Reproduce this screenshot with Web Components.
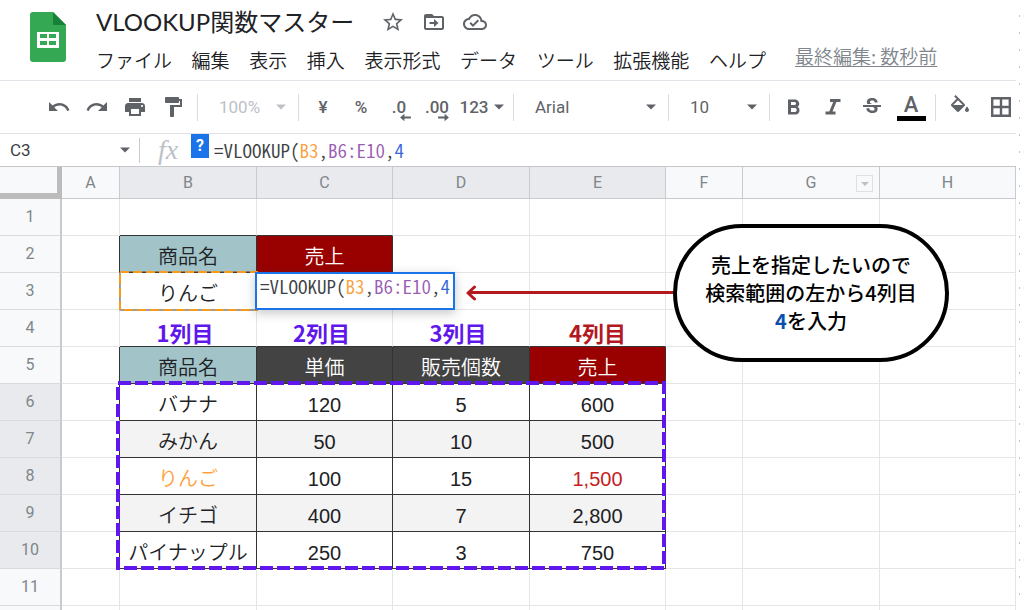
<!DOCTYPE html>
<html lang="ja">
<head>
<meta charset="utf-8">
<meta name="viewport" content="width=device-width, initial-scale=1">
<title>VLOOKUP関数マスター</title>
<style>
  html, body { margin: 0; background: #fff; }
  body { font-family: "Liberation Sans", "Noto Sans CJK JP", sans-serif; color: #202124; overflow-x: hidden; }
</style>
</head>
<body>
<sheet-app></sheet-app>
<script>
const define = (name, html, setup) => {
  const template = document.createElement('template');
  template.innerHTML = html;
  customElements.define(name, class extends HTMLElement {
    constructor() {
      super();
      this.attachShadow({ mode: 'open' }).append(template.content.cloneNode(true));
    }
    connectedCallback() { if (setup) setup(this, this.shadowRoot); }
  });
};

/* ---------- icons ---------- */
const ICONS = {
  undo: 'M12.5 8c-2.65 0-5.05.99-6.9 2.6L2 7v9h9l-3.62-3.62c1.39-1.16 3.16-1.88 5.12-1.88 3.54 0 6.55 2.31 7.6 5.5l2.37-.78C21.08 11.03 17.15 8 12.5 8z',
  redo: 'M18.4 10.6C16.55 8.99 14.15 8 11.5 8c-4.65 0-8.58 3.03-9.96 7.22L3.9 16c1.05-3.19 4.05-5.5 7.6-5.5 1.95 0 3.73.72 5.12 1.88L13 16h9V7l-3.6 3.6z',
  print: 'M19 8H5c-1.66 0-3 1.34-3 3v6h4v4h12v-4h4v-6c0-1.66-1.34-3-3-3zm-3 11H8v-5h8v5zm3-7c-.55 0-1-.45-1-1s.45-1 1-1 1 .45 1 1-.45 1-1 1zm-1-9H6v4h12V3z',
  paint: 'M18 4V3c0-.55-.45-1-1-1H5c-.55 0-1 .45-1 1v4c0 .55.45 1 1 1h12c.55 0 1-.45 1-1V6h1v4H9v11c0 .55.45 1 1 1h2c.55 0 1-.45 1-1v-9h8V4h-3z',
  star: 'M22 9.24l-7.19-.62L12 2 9.19 8.63 2 9.24l5.46 4.73L5.82 21 12 17.27 18.18 21l-1.63-7.03L22 9.24zM12 15.4l-3.76 2.27 1-4.28-3.32-2.88 4.38-.38L12 6.1l1.71 4.04 4.38.38-3.32 2.88 1 4.28L12 15.4z',
  move: 'M20 6h-8l-2-2H4c-1.1 0-2 .9-2 2v12c0 1.1.9 2 2 2h16c1.1 0 2-.9 2-2V8c0-1.1-.9-2-2-2zm0 12H4V8h16v10zM12 9l4.500 4-4.500 4v-3H7.500v-2H12z',
  cloud: 'M19.35 10.04C18.67 6.59 15.64 4 12 4 9.110 4 6.600 5.640 5.350 8.040 2.340 8.360 0 10.910 0 14c0 3.310 2.690 6 6 6h13c2.760 0 5-2.240 5-5 0-2.640-2.050-4.780-4.650-4.960zM19 18H6c-2.210 0-4-1.790-4-4s1.790-4 4-4h.71C7.370 7.690 9.480 6 12 6c3.040 0 5.500 2.460 5.500 5.500v.5H19c1.660 0 3 1.340 3 3s-1.340 3-3 3zm-9-3.820l-2.090-2.090L6.500 13.500 10 17l6.010-6.010-1.410-1.410z',
  bold: 'M15.6 11.8c1-.7 1.650-1.800 1.650-2.800 0-2.260-1.750-4.500-4.250-4.500H6V19.500h7.800c2.100 0 3.700-1.900 3.700-4 0-1.700-.7-3-1.900-3.700zM9 7h3.500c.83 0 1.500.67 1.500 1.500S13.330 10 12.500 10H9V7zm4 10H9v-4h4c1 0 1.700.9 1.700 2s-.7 2-1.700 2z',
  italic: 'M9 4v3h3.200L8.300 16.500H4.500v3H14.500v-3h-3l3.900-9.500H19.500V4z',
  strike: 'M7.240 8.750c-.26-.48-.39-1.030-.39-1.670 0-.61.13-1.160.4-1.670.26-.5.63-.93 1.110-1.290.48-.35 1.050-.63 1.700-.83.66-.19 1.390-.29 2.180-.29.81 0 1.540.11 2.210.34.66.22 1.230.54 1.690.94.470.4.830.88 1.080 1.430s.38 1.150.38 1.810h-3.010c0-.31-.05-.59-.15-.85-.09-.27-.24-.49-.44-.68-.2-.19-.45-.33-.75-.44-.3-.1-.66-.16-1.060-.16-.39 0-.74.04-1.030.13s-.53.210-.72.360c-.19.160-.34.340-.44.550-.1.210-.15.430-.15.660 0 .48.250.88.740 1.210.38.250.77.480 1.410.7H7.390c-.05-.08-.11-.17-.15-.25zM21 12v-2H3v2h9.620c.18.070.4.140.55.2.37.170.66.340.87.510.21.170.35.360.43.570.07.2.11.430.11.690 0 .23-.05.450-.14.660-.09.2-.23.380-.42.530-.19.150-.42.260-.71.350-.29.080-.63.130-1.010.13-.43 0-.83-.04-1.180-.13s-.66-.23-.91-.42c-.25-.19-.45-.44-.59-.75s-.25-.76-.25-1.210H6.400c0 .55.080 1.130.24 1.580s.370.850.650 1.210c.28.350.6.660.98.920.37.260.78.480 1.220.65.440.17.9.3 1.380.39.480.08.960.13 1.440.13.8 0 1.530-.09 2.180-.28s1.210-.45 1.670-.79c.46-.34.820-.77 1.070-1.270s.38-1.070.38-1.710c0-.6-.1-1.140-.31-1.610-.05-.11-.11-.23-.17-.33H21z',
  fill: 'M16.560 8.940L7.620 0 6.210 1.410l2.380 2.380-5.150 5.150c-.59.590-.59 1.540 0 2.120l5.500 5.500c.290.290.680.440 1.060.440s.770-.150 1.060-.440l5.500-5.500c.590-.580.590-1.530 0-2.120zM5.210 10L10 5.210 14.790 10H5.210zM19 11.500s-2 2.170-2 3.500c0 1.100.9 2 2 2s2-.9 2-2c0-1.330-2-3.500-2-3.500z',
  borders: 'M2 2v20h20V2H2zm8.800 17.600H4.400v-6.400h6.400v6.400zm0-8.800H4.400V4.400h6.400v6.400zm8.800 8.800h-6.400v-6.400h6.400v6.400zm0-8.800h-6.400V4.400h6.400v6.400z',
  caret: 'M6 9l6 6 6-6z',
  left: 'M2 12l8-7v5h12v4H10v5z',
  right: 'M22 12l-8-7v5H2v4h12v5z'
};
define('ui-icon', `
  <style>
    :host { display: inline-flex; width: 24px; height: 24px; flex: none; }
    svg { width: 100%; height: 100%; fill: currentColor; }
  </style>
  <svg viewBox="0 0 24 24" aria-hidden="true"><path fill-rule="evenodd"/></svg>`,
  (el, root) => root.querySelector('path').setAttribute('d', ICONS[el.getAttribute('name')]));

/* ---------- title and menus ---------- */
define('sheet-header', `
  <style>
    :host { display: flex; height: 80px; border-bottom: 1px solid #e1e3e8; padding-left: 30px; gap: 30px; }
    .logo { flex: none; width: 36px; height: 50px; margin-top: 12px; }
    .main { flex: 1; min-width: 0; display: flex; flex-direction: column; }
    .title { display: flex; align-items: center; height: 44px; gap: 17px; }
    h1 { margin: 0 10px 0 0; font: 400 24px/32px Lato, "Noto Sans CJK JP", sans-serif; white-space: nowrap; }
    button, a { font: 350 19px/28px "Noto Sans CJK JP", sans-serif; white-space: nowrap; }
    button { border: 0; padding: 0; background: none; color: #202124; }
    .title button { display: flex; color: #5f6368; }
    .row { display: flex; gap: 29px; height: 32px; align-items: center; }
    nav { display: flex; justify-content: space-between; flex: 0 1 670px; }
    a { color: #80868b; text-underline-offset: 2px; margin-bottom: 8px; }
  </style>
  <svg class="logo" viewBox="0 0 36 50" aria-hidden="true">
    <path fill="#34a853" d="M3 0h20l13 13v34a3 3 0 0 1-3 3H3a3 3 0 0 1-3-3V3a3 3 0 0 1 3-3z"/>
    <path fill="#188038" d="M23 0l13 13H23z"/>
    <path fill="#fff" fill-rule="evenodd" d="M7 20h22v16H7zM10 22v4h7v-4zM19 22v4h7v-4zM10 29v4h7v-4zM19 29v4h7v-4z"/>
  </svg>
  <div class="main">
    <div class="title">
      <h1>VLOOKUP関数マスター</h1>
      <button aria-label="スターを付ける"><ui-icon name="star"></ui-icon></button>
      <button aria-label="移動"><ui-icon name="move"></ui-icon></button>
      <button aria-label="保存済み"><ui-icon name="cloud"></ui-icon></button>
    </div>
    <div class="row">
      <nav>
        <button>ファイル</button><button>編集</button><button>表示</button><button>挿入</button>
        <button>表示形式</button><button>データ</button><button>ツール</button><button>拡張機能</button><button>ヘルプ</button>
      </nav>
      <a href="#history">最終編集: 数秒前</a>
    </div>
  </div>`);

/* ---------- toolbar ---------- */
define('tool-group', `
  <style>
    :host { display: flex; align-items: center; height: 27px; padding: 0 5px; border-right: 1px solid #dadce0; }
    :host([last]) { border: 0; }
  </style><slot></slot>`);

define('tool-button', `
  <style>
    :host { display: block; flex: none; width: 38px; }
    :host([wide]) { width: 52px; }
    button { position: relative; width: 100%; height: 36px; display: flex; align-items: center; justify-content: center;
      border: 0; padding: 0; background: none; color: inherit; font: 500 17px/20px Roboto, sans-serif; }
  </style>
  <button><slot></slot></button>`,
  (el, root) => root.querySelector('button').setAttribute('aria-label', el.getAttribute('label')));

define('tool-select', `
  <style>
    :host { display: flex; position: relative; flex: none; width: 90px; align-items: center; }
    :host([wide]) { width: 144px; }
    :host([muted]) { color: #bdc1c6; }
    select { appearance: none; width: 100%; height: 32px; border: 0; margin: 0; padding: 0 24px 0 16px; background: none;
      color: inherit; font: 400 17px/20px Roboto, sans-serif; opacity: 1; }
    ui-icon { position: absolute; right: 2px; width: 20px; height: 20px; pointer-events: none; }
  </style>
  <select><option></option></select><ui-icon name="caret"></ui-icon>`,
  (el, root) => {
    root.querySelector('select').setAttribute('aria-label', el.getAttribute('label'));
    root.querySelector('option').textContent = el.getAttribute('value');
  });

define('tool-bar', `
  <style>
    :host { display: flex; align-items: center; height: 52px; padding-left: 35px; border-bottom: 1px solid #e1e3e8; color: #5f6368; }
    .format { gap: 1px; }
    .paint { gap: 3px; }
    .shift { position: absolute; right: 6px; bottom: 1px; width: 13px; height: 13px; }
    .caret { width: 20px; height: 20px; margin-right: -4px; }
    .color { display: flex; flex-direction: column; align-items: center; font-size: 22px; line-height: 22px; }
    .color::after { content: ""; width: 29px; height: 5px; background: #000; }
  </style>
  <tool-group>
    <tool-button label="元に戻す"><ui-icon name="undo"></ui-icon></tool-button>
    <tool-button label="やり直し"><ui-icon name="redo"></ui-icon></tool-button>
    <tool-button label="印刷"><ui-icon name="print"></ui-icon></tool-button>
    <tool-button label="書式を貼り付け"><ui-icon name="paint"></ui-icon></tool-button>
  </tool-group>
  <tool-group><tool-select muted label="ズーム" value="100%"></tool-select></tool-group>
  <tool-group>
    <tool-button label="通貨">¥</tool-button>
    <tool-button label="パーセント">%</tool-button>
    <tool-button label="小数点以下の桁数を減らす">.0<ui-icon class="shift" name="left"></ui-icon></tool-button>
    <tool-button label="小数点以下の桁数を増やす">.00<ui-icon class="shift" name="right"></ui-icon></tool-button>
    <tool-button wide label="表示形式の詳細">123<ui-icon class="caret" name="caret"></ui-icon></tool-button>
  </tool-group>
  <tool-group><tool-select wide label="フォント" value="Arial"></tool-select></tool-group>
  <tool-group><tool-select label="フォントサイズ" value="10"></tool-select></tool-group>
  <tool-group class="format">
    <tool-button label="太字"><ui-icon name="bold"></ui-icon></tool-button>
    <tool-button label="斜体"><ui-icon name="italic"></ui-icon></tool-button>
    <tool-button label="取り消し線"><ui-icon name="strike"></ui-icon></tool-button>
    <tool-button label="テキストの色"><span class="color">A</span></tool-button>
  </tool-group>
  <tool-group last class="paint">
    <tool-button label="塗りつぶしの色"><ui-icon name="fill"></ui-icon></tool-button>
    <tool-button label="枠線"><ui-icon name="borders"></ui-icon></tool-button>
  </tool-group>`);

/* ---------- formula ---------- */
define('formula-text', `
  <style>
    :host { display: block; white-space: nowrap; color: #3c4043;
      font: 350 19px/24px "Noto Sans CJK JP", sans-serif; font-feature-settings: "hwid"; }
    .key { color: #f9a13c; } .range { color: #9a5cb4; } .index { color: #3367d6; }
    div { outline: 0; }
  </style>
  <div role="textbox" contenteditable="true" spellcheck="false" aria-label="数式">=VLOOKUP(<span class="key">B3</span>,<span class="range">B6:E10</span>,<span class="index">4</span></div>`);

define('formula-bar', `
  <style>
    :host { display: flex; align-items: center; height: 32px; }
    .name { display: flex; align-items: center; width: 139px; height: 25px; border-right: 1px solid #c8cacd; color: #5f6368; }
    input { flex: 1; min-width: 0; border: 0; padding: 0 0 0 10px; color: #3c4043; font: 400 17px/20px Roboto, sans-serif; background: none; outline: 0; }
    .name ui-icon { width: 20px; height: 20px; margin-right: 4px; }
    .fx { width: 50px; box-sizing: border-box; padding-left: 6px; text-align: center; color: #bdc1c6; font: italic 28px/30px "Liberation Serif", serif; }
    .help { align-self: flex-start; width: 18px; height: 24px; margin: 0 5px 0 1px; border: 0; padding: 0; background: #1a73e8; color: #fff; font: 700 16px/24px Roboto, sans-serif; }
  </style>
  <label class="name"><input value="C3" aria-label="名前ボックス"><ui-icon name="caret"></ui-icon></label>
  <span class="fx">fx</span><button class="help" aria-label="ヘルプ">?</button>
  <formula-text></formula-text>`);

/* ---------- overlays ---------- */
define('range-outline', `
  <style>
    :host { display: block; min-width: 0; min-height: 0; }
    svg { display: block; width: 100%; height: 100%; overflow: visible; }
    rect { fill: none; }
    .base { stroke: #4a4a4a; stroke-width: 1; }
    .dash { stroke: #f79b1e; stroke-width: 2; stroke-dasharray: 9 4; }
    :host([bold]) .base { stroke: none; }
    :host([bold]) .dash { stroke: #5f17eb; stroke-width: 4; stroke-dasharray: 13 4; }
  </style>
  <svg aria-hidden="true"><rect class="base" width="100%" height="100%"/><rect class="dash" width="100%" height="100%"/></svg>`);

define('cell-editor', `
  <style>
    :host { display: block; box-sizing: border-box; width: 200px; height: 38px; border: 2px solid #1a73e8; padding-left: 3px;
      background: #fff; box-shadow: 0 3px 10px rgba(60,64,67,.3); }
  </style><slot></slot>`);

define('call-out', `
  <style>
    :host { display: flex; align-items: center; }
    .head { width: 12px; height: 16px; flex: none; fill: none; stroke: #b3191e; stroke-width: 3; stroke-linecap: round; stroke-linejoin: round; }
    .line { flex: 1; height: 3px; margin-left: -9px; background: #b3191e; }
    .bubble { box-sizing: border-box; width: 276px; flex: none; border: 4px solid #000; border-radius: 69px; padding: 23px 0;
      background: #fff; color: #000; text-align: center; font: 500 20px/28px "Noto Sans CJK JP", sans-serif; }
    ::slotted(p) { margin: 0; }
  </style>
  <svg class="head" viewBox="0 0 12 16" aria-hidden="true"><path d="M8.500 2L2 8l6.500 6"/></svg>
  <span class="line"></span><div class="bubble"><slot></slot></div>`);

/* ---------- grid ---------- */
const COLUMNS = ['A', 'B', 'C', 'D', 'E', 'F', 'G', 'H'];
const WIDTHS = [62, 58, 137, 136, 137, 136, 77, 137, 136];
const CELLS = {
  B2: ['商品名', 'teal'], C2: ['売上', 'red'], B3: ['りんご', ''],
  B4: ['1列目', 'label'], C4: ['2列目', 'label'], D4: ['3列目', 'label'], E4: ['4列目', 'label warn'],
  B5: ['商品名', 'teal'], C5: ['単価', 'dark'], D5: ['販売個数', 'dark'], E5: ['売上', 'red']
};
[['バナナ', '120', '5', '600'], ['みかん', '50', '10', '500'], ['りんご', '100', '15', '1,500'],
 ['イチゴ', '400', '7', '2,800'], ['パイナップル', '250', '3', '750']].forEach((row, r) =>
  row.forEach((text, c) => { CELLS['BCDE'[c] + (r + 6)] = [text, r % 2 ? 'band' : '']; }));
CELLS.B8[1] = 'key';
CELLS.E8[1] = 'warn';

const boxed = (c, r) => (r === 2 && (c === 1 || c === 2)) || (c >= 1 && c <= 4 && r >= 5 && r <= 10);

define('sheet-grid', `
  <style>
    :host { display: block; position: relative; border-top: 1px solid #c4c6c9; }
    table { width: 100%; table-layout: fixed; border-collapse: separate; border-spacing: 0; }
    th, td { box-sizing: border-box; height: 37px; padding: 0; text-align: center; white-space: nowrap;
      border: 0 solid #e4e5e6; border-width: 0 1px 1px 0; }
    th { position: relative; background: #f8f9fa; color: #80868b; border-color: #c8cacd; font: 400 16px/20px Roboto, sans-serif; }
    thead th { height: 32px; }
    tbody th { border-right-width: 2px; border-bottom-color: #d8dadd; }
    th.on { background: #e8eaed; }
    .corner { border: 0 solid #bcbcbc; border-width: 0 5px 6px 0; }
    td { padding-top: 5px; font: 350 20px/28px "Liberation Sans", "Noto Sans CJK JP", sans-serif; color: #202124; }
    td.r { border-right-color: #333; } td.b { border-bottom-color: #333; }
    .teal { background: #a2c4c9; } .dark { background: #434343; color: #fff; } .red { background: #990000; color: #fff; }
    .band { background: #f3f3f3; } .key { color: #ff9f3e; } .warn { color: #c5221f; }
    .label { padding: 8px 6px 0 0; color: #5f17eb; font: 700 22px/28px "Noto Sans CJK JP", sans-serif; }
    .label.warn { padding-right: 0; color: #b3191e; }
    .tail > * { height: 4px; padding: 0; border-bottom: 0; }
    .filter { position: absolute; right: 6px; top: 8px; width: 17px; height: 17px; padding: 0; border: 1px solid #e0e0e0; background: #f8f9fa; color: #bdc1c6; display: flex; align-items: center; justify-content: center; }
    .filter ui-icon { width: 16px; height: 16px; }
    .layer { position: absolute; inset: 0; display: grid; pointer-events: none;
      grid-template-columns: ${WIDTHS.map(w => `minmax(0, ${w}fr)`).join(' ')};
      grid-template-rows: 32px repeat(11, 37px); }
    .lookup { grid-area: 4 / 3 / 5 / 4; margin-top: -1px; }
    .range { grid-area: 7 / 3 / 12 / 7; margin: -1px 2px 1px -2px; }
    cell-editor { grid-area: 4 / 4; margin: -1px 0 0 -2px; }
    call-out { grid-area: 2 / 5 / 7 / 10; margin: 2px 67px 0 73px; }
    .pick { color: #0b4fae; font-weight: 700; }
  </style>
  <table>
    <colgroup></colgroup><thead></thead><tbody></tbody>
  </table>
  <div class="layer">
    <range-outline class="lookup"></range-outline>
    <range-outline class="range" bold></range-outline>
    <cell-editor><formula-text></formula-text></cell-editor>
    <call-out>
      <p>売上を指定したいので</p><p>検索範囲の左から4列目</p><p><span class="pick">4</span>を入力</p>
    </call-out>
  </div>`,
  (el, root) => {
    root.querySelector('colgroup').innerHTML = WIDTHS.map(w => `<col style="width:${w}px">`).join('');
    root.querySelector('thead').innerHTML = '<tr><th class="corner"></th>' + COLUMNS.map((name, c) =>
      `<th scope="col" class="${c >= 1 && c <= 4 ? 'on' : ''}">${name}${name === 'G' ? '<button class="filter" aria-label="フィルタ"><ui-icon name="caret"></ui-icon></button>' : ''}</th>`).join('') + '</tr>';
    let rows = '';
    for (let r = 1; r <= 11; r++) {
      rows += `<tr><th scope="row" class="${r >= 6 && r <= 10 ? 'on' : ''}">${r}</th>` + COLUMNS.map((name, c) => {
        const [text, kind] = CELLS[name + r] || ['', ''];
        const right = boxed(c, r) || boxed(c + 1, r) ? ' r' : '';
        const bottom = boxed(c, r) || boxed(c, r + 1) ? ' b' : '';
        return `<td class="${kind}${right}${bottom}">${text}</td>`;
      }).join('') + '</tr>';
    }
    root.querySelector('tbody').innerHTML = rows + '<tr class="tail"><th></th>' + '<td></td>'.repeat(8) + '</tr>';
  });

define('sheet-app', `
  <style>
    :host { display: block; padding-right: 8px;
      background: repeating-linear-gradient(#fff 0 15px, #c4c6c9 15px 17px) right 4px top / 1px 100% no-repeat #fff; }
  </style>
  <sheet-header></sheet-header>
  <tool-bar></tool-bar>
  <formula-bar></formula-bar>
  <sheet-grid></sheet-grid>`);
</script>
</body>
</html>
